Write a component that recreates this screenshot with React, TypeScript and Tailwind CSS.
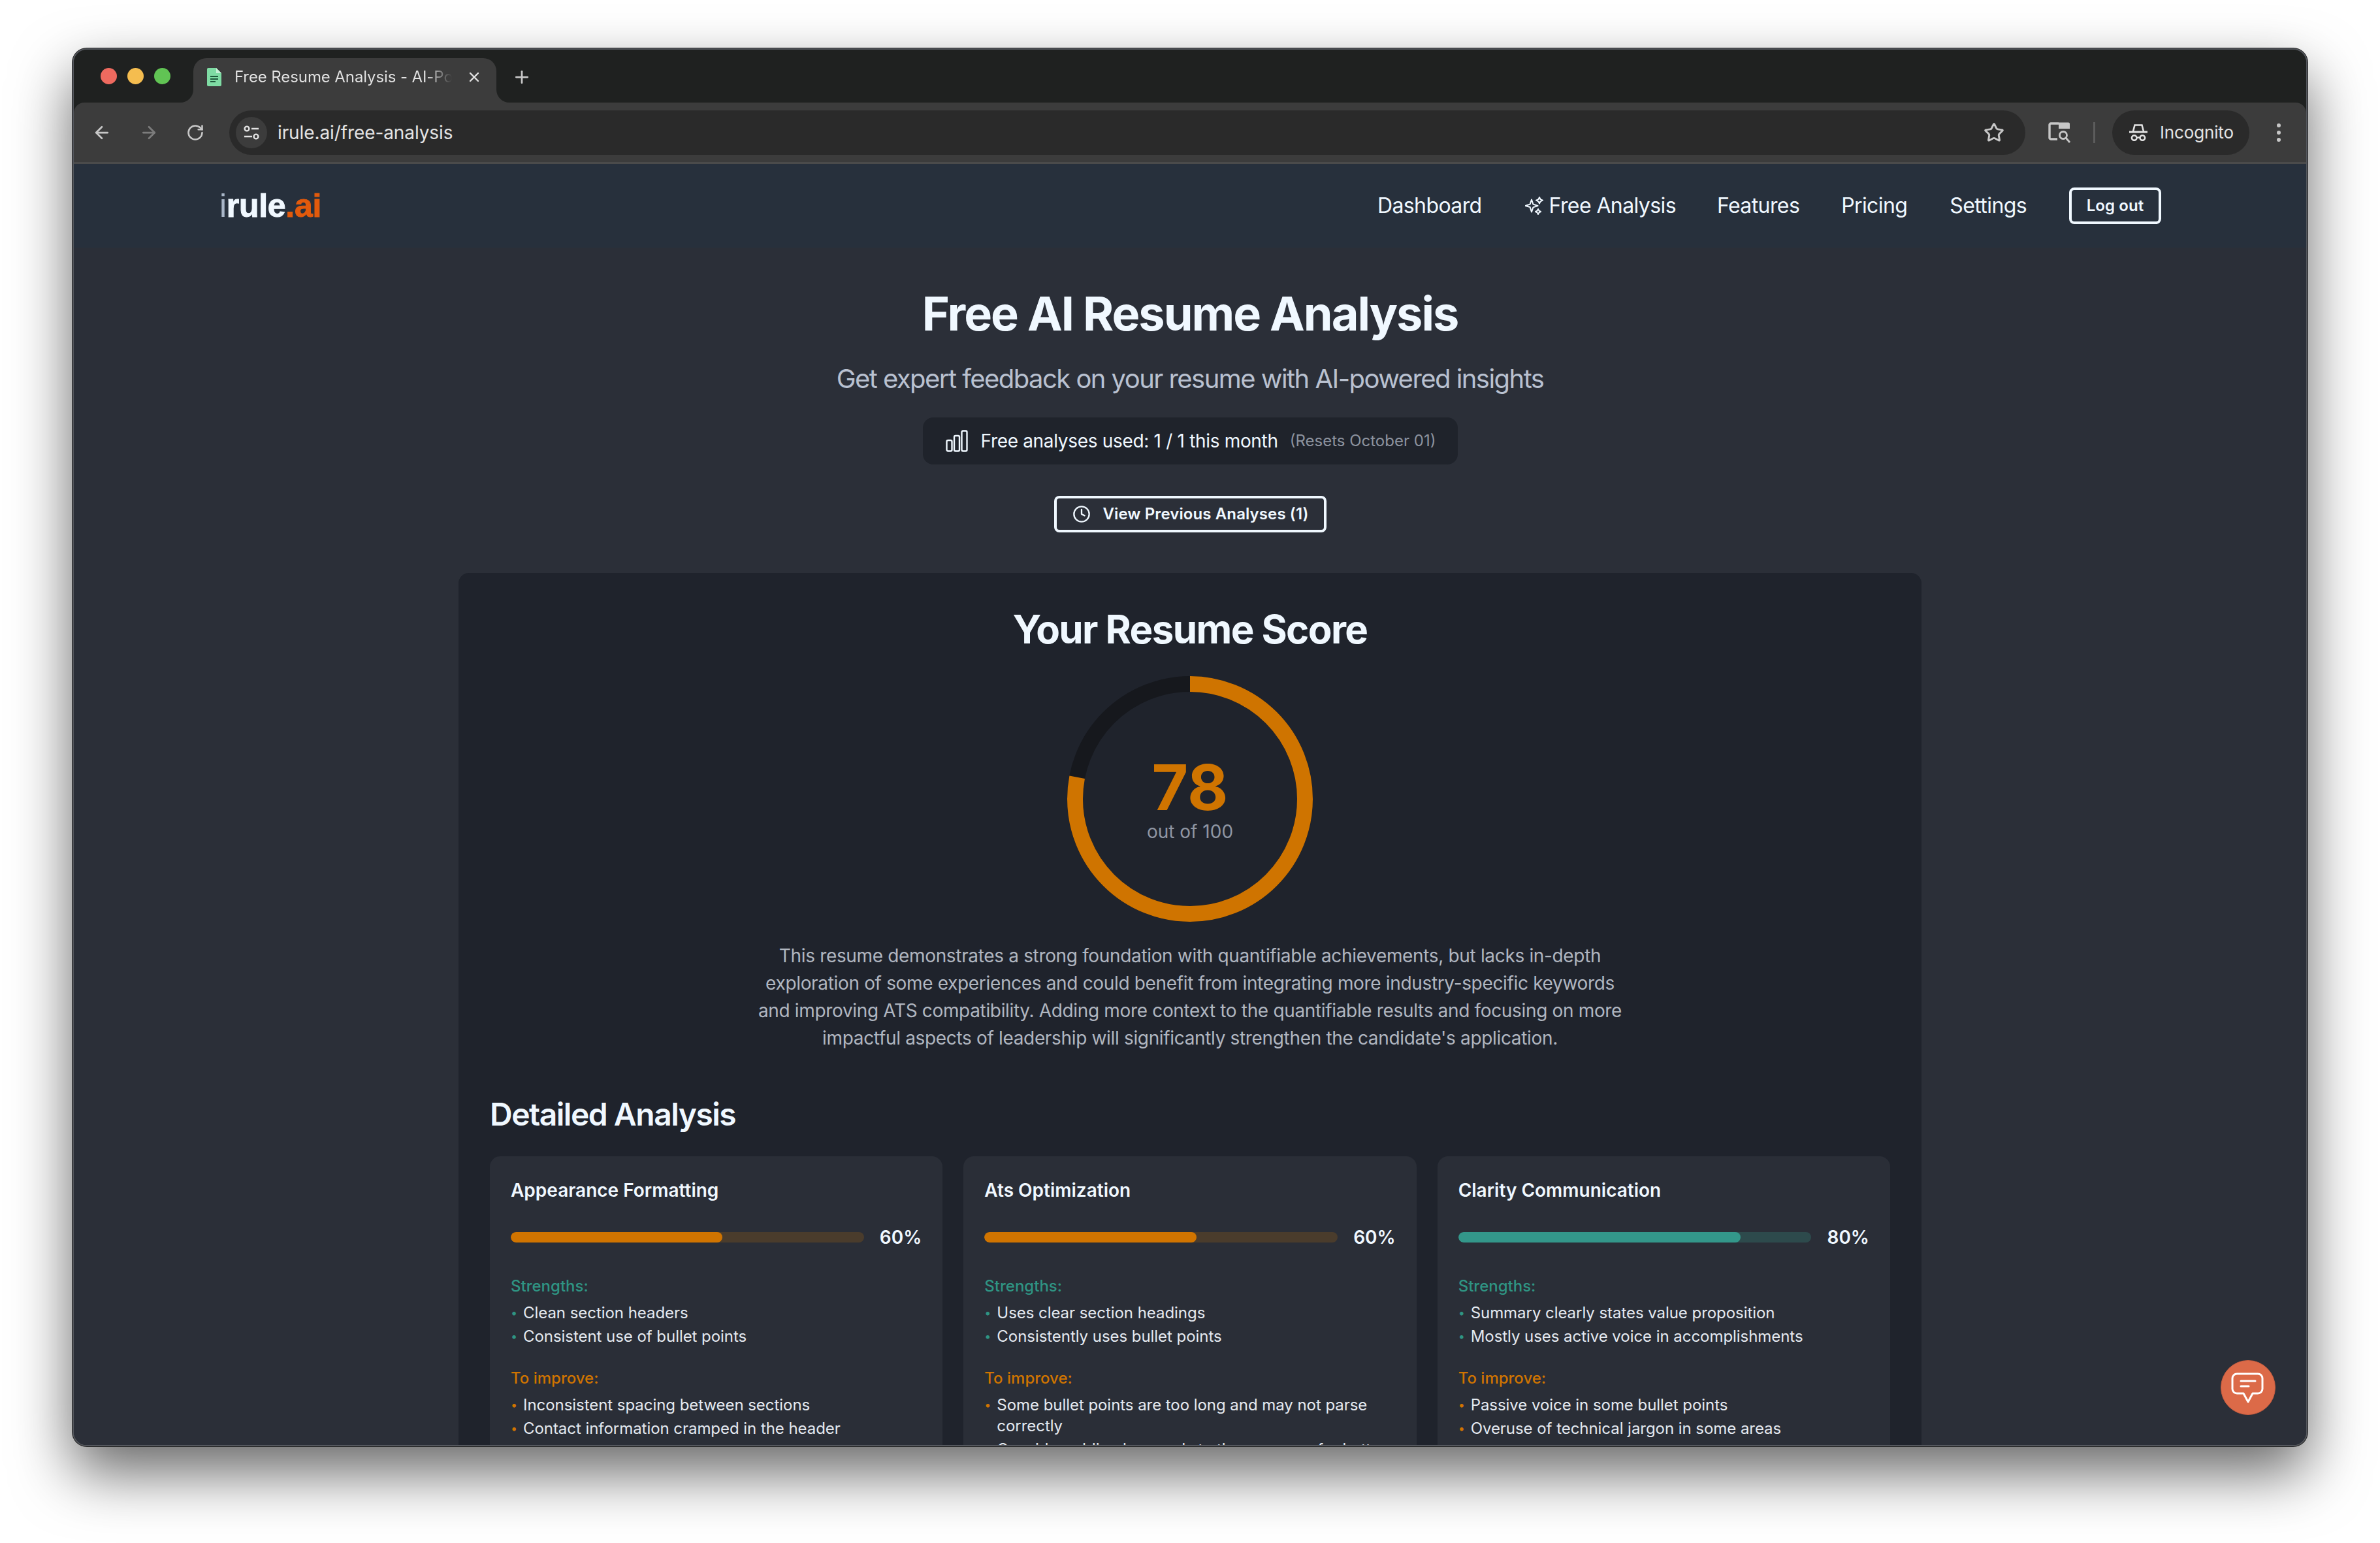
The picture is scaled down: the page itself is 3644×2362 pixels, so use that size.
import { ArrowLeft, ArrowRight, Clock, Plus, RotateCw, Star, X } from "lucide-react";

const CARDS = [
	{
		title: "Appearance Formatting",
		score: 60,
		strengths: ["Clean section headers", "Consistent use of bullet points"],
		improve: ["Inconsistent spacing between sections", "Contact information cramped in the header"],
	},
	{
		title: "Ats Optimization",
		score: 60,
		strengths: ["Uses clear section headings", "Consistently uses bullet points"],
		improve: ["Some bullet points are too long and may not parse correctly", "Consider adding keywords to the summary for better"],
	},
	{
		title: "Clarity Communication",
		score: 80,
		strengths: ["Summary clearly states value proposition", "Mostly uses active voice in accomplishments"],
		improve: ["Passive voice in some bullet points", "Overuse of technical jargon in some areas"],
	},
];

function BulletList({ items, dot }: { items: string[]; dot: string }) {
	return (
		<ul className="mt-[9px] flex flex-col gap-[4px]">
			{items.map((item) => (
				<li key={item} className="flex text-[24px] leading-[32px] tracking-[-0.05px] text-[#e4e9f0]">
					<span className={`w-[19px] shrink-0 text-[18px] ${dot}`}>•</span>
					<span>{item}</span>
				</li>
			))}
		</ul>
	);
}

function AnalysisCard({ card }: { card: (typeof CARDS)[number] }) {
	const good = card.score >= 70;
	return (
		<div className="h-[520px] rounded-[16px] bg-[#2a2e37] px-[32px] pt-[32px]">
			<h3 className="text-[28px] leading-[40px] font-semibold text-[#f0f8ff]">{card.title}</h3>
			<div className="mt-[32px] flex h-[40px] items-center gap-[24px]">
				<div className={`h-[16px] flex-1 overflow-hidden rounded-full ${good ? "bg-[#2d4a4c]" : "bg-[#4a3c2c]"}`}>
					{/* bar width comes from the score */}
					<div className={`h-full rounded-full ${good ? "bg-[#33978a]" : "bg-[#d07400]"}`} style={{ width: `${card.score}%` }} />
				</div>
				<span className="text-[28px] leading-[40px] font-semibold text-[#f0f8ff]">{card.score}%</span>
			</div>
			<div className="mt-[39px] text-[24px] leading-[32px] font-medium text-[#2f9483]">Strengths:</div>
			<BulletList items={card.strengths} dot="text-[#2f9483]" />
			<div className="mt-[32px] text-[24px] leading-[32px] font-medium text-[#d07400]">To improve:</div>
			<BulletList items={card.improve} dot="text-[#d07400]" />
		</div>
	);
}

function ScoreRing({ score }: { score: number }) {
	const r = 176;
	const c = 2 * Math.PI * r;
	return (
		<div className="relative mx-auto mt-[36px] h-[376px] w-[376px]">
			<svg viewBox="0 0 376 376" className="h-[376px] w-[376px] -rotate-90">
				<circle cx="188" cy="188" r={r} fill="none" stroke="#16181d" strokeWidth="24" />
				<circle cx="188" cy="188" r={r} fill="none" stroke="#cf7400" strokeWidth="24" strokeDasharray={`${(c * score) / 100} ${c}`} />
			</svg>
			<div className="absolute inset-0 flex flex-col items-center justify-center">
				<span className="mt-[4px] text-[96px] leading-[96px] font-bold text-[#cf7400]">{score}</span>
				<span className="text-[28px] leading-[40px] text-[#8f96a3]">out of 100</span>
			</div>
		</div>
	);
}

function BrowserChrome() {
	return (
		<>
			<div className="flex h-[81px] shrink-0 items-end bg-[#1f2120] pl-[41px]">
				<div className="flex h-[69px] items-center gap-[16px] self-end pb-[12px]">
					<span className="h-[25px] w-[25px] rounded-full bg-[#ee6a5f]" />
					<span className="h-[25px] w-[25px] rounded-full bg-[#f5bd4f]" />
					<span className="h-[25px] w-[25px] rounded-full bg-[#61c454]" />
				</div>
				<div className="relative ml-[35px] flex h-[68px] w-[464px] items-center rounded-t-[20px] bg-[#3c3c3c] pb-[10px] pl-[21px]">
					<svg viewBox="0 0 20 20" className="absolute bottom-0 left-[-20px] h-[20px] w-[20px]">
						<path d="M20 0v20H0A20 20 0 0 0 20 0z" fill="#3c3c3c" />
					</svg>
					<svg viewBox="0 0 20 20" className="absolute right-[-20px] bottom-0 h-[20px] w-[20px]">
						<path d="M0 0v20h20A20 20 0 0 1 0 0z" fill="#3c3c3c" />
					</svg>
					<svg viewBox="0 0 22 28" className="h-[28px] w-[22px] shrink-0">
						<path d="M2 0h12l8 8v18a2 2 0 0 1-2 2H2a2 2 0 0 1-2-2V2a2 2 0 0 1 2-2z" fill="#7fdca4" />
						<path d="M14 0l8 8h-8z" fill="#c7f0d6" />
						<path d="M5 12h12v2H5zM5 16h12v2H5zM5 20h8v2H5z" fill="#1f5a3c" />
					</svg>
					<span className="ml-[20px] w-[333px] overflow-hidden bg-gradient-to-r from-[#e3e3e3] from-[88%] to-transparent bg-clip-text text-[24px] leading-[32px] tracking-[-0.1px] whitespace-nowrap text-transparent">
						Free Resume Analysis - AI-Po
					</span>
					<X className="ml-[22px] h-[24px] w-[24px] shrink-0 text-[#e3e3e3]" strokeWidth={2.4} />
				</div>
				<Plus className="mb-[24px] ml-[24px] h-[30px] w-[30px] text-[#c7c7c7]" strokeWidth={2.2} />
			</div>
			<div className="flex h-[94px] shrink-0 items-center rounded-t-[16px] border-b-[3px] border-[#4b4b4b] bg-[#3c3c3c] pr-[39px] pl-[28px]">
				<ArrowLeft className="h-[30px] w-[30px] text-[#c7c7c7]" strokeWidth={2.2} />
				<ArrowRight className="ml-[42px] h-[30px] w-[30px] text-[#7c7c7c]" strokeWidth={2.2} />
				<RotateCw className="ml-[42px] h-[28px] w-[28px] text-[#c7c7c7]" strokeWidth={2.2} />
				<div className="ml-[38px] flex h-[68px] flex-1 items-center rounded-full bg-[#2a2a2a] pr-[32px] pl-[10px]">
					<div className="flex h-[48px] w-[48px] items-center justify-center rounded-full bg-[#3c3c3c]">
						<svg viewBox="0 0 26 24" className="h-[24px] w-[26px]" fill="none" stroke="#e3e3e3" strokeWidth="2.4">
							<circle cx="6" cy="6" r="3.4" />
							<path d="M13 6h11M2 18h12" />
							<circle cx="20" cy="18" r="3.4" />
						</svg>
					</div>
					<span className="ml-[16px] flex-1 text-[28px] leading-[36px] tracking-[-0.1px] text-[#e3e3e3]">irule.ai/free-analysis</span>
					<Star className="h-[32px] w-[32px] text-[#c7c7c7]" strokeWidth={2.2} />
				</div>
				<svg viewBox="0 0 36 34" className="ml-[35px] h-[34px] w-[36px] shrink-0" fill="none">
					<path d="M14 27H4a2 2 0 0 1-2-2V5a2 2 0 0 1 2-2h12" stroke="#c7c7c7" strokeWidth="3.4" />
					<path d="M16 1.5h15a2 2 0 0 1 2 2V11H16z" fill="#c7c7c7" />
					<circle cx="23" cy="21" r="5.5" stroke="#c7c7c7" strokeWidth="2.8" />
					<path d="M27 25l6 7" stroke="#c7c7c7" strokeWidth="2.8" />
				</svg>
				<div className="ml-[33px] h-[32px] w-[3px] shrink-0 bg-[#5c5c5c]" />
				<div className="ml-[26px] flex h-[68px] w-[210px] shrink-0 items-center rounded-full bg-[#2a2a2a] pl-[26px]">
					<svg viewBox="0 0 28 26" className="h-[26px] w-[28px] shrink-0" fill="none" stroke="#e3e3e3" strokeWidth="2.6">
						<path d="M6 11L8.5 1.5h11L22 11" />
						<path d="M0 12h28" strokeWidth="3" />
						<circle cx="7.7" cy="21" r="3.8" />
						<circle cx="20.3" cy="21" r="3.8" />
						<path d="M11.5 20.5h5" />
					</svg>
					<span className="ml-[19px] text-[26px] leading-[34px] tracking-[-0.15px] text-[#e3e3e3]">Incognito</span>
				</div>
				<div className="ml-[42px] flex shrink-0 flex-col gap-[5px]">
					<span className="h-[6px] w-[6px] rounded-full bg-[#c7c7c7]" />
					<span className="h-[6px] w-[6px] rounded-full bg-[#c7c7c7]" />
					<span className="h-[6px] w-[6px] rounded-full bg-[#c7c7c7]" />
				</div>
			</div>
		</>
	);
}

function SiteHeader() {
	return (
		<header className="flex h-[128px] shrink-0 items-center justify-between bg-[#27303c] pr-[222px] pl-[223px]">
			<div className="font-['Liberation_Sans',sans-serif] text-[50px] leading-[50px] font-bold tracking-[-0.3px]">
				<span className="font-normal text-[#a9b6c8]">i</span>
				<span className="text-[#f0f8ff] [-webkit-text-stroke:1px_#f0f8ff]">rule</span>
				<span className="text-[#e25a0c] [-webkit-text-stroke:1px_#e25a0c]">.ai</span>
			</div>
			<nav className="flex items-center text-[32px] leading-[48px] tracking-[-0.6px] text-[#f0f8ff]">
				<a>Dashboard</a>
				<a className="ml-[66px] flex items-center gap-[9px]">
					<svg viewBox="0 0 28 28" className="h-[28px] w-[28px]" fill="none" stroke="#f0f8ff" strokeWidth="2" strokeLinejoin="round">
						<path d="M10 4.5l2.4 7.1 7.1 2.4-7.1 2.4L10 23.5l-2.4-7.5L.5 14l7.1-2.4z" />
						<path d="M22 1l1.6 3.2L27 5.7l-3.4 1.6L22 10.5l-1.6-3.2L17 5.7l3.4-1.5z" />
						<path d="M20 19l1.4 2.6L24 23l-2.6 1.4L20 27l-1.4-2.6L16 23l2.6-1.4z" />
					</svg>
					Free Analysis
				</a>
				<a className="ml-[63px]">Features</a>
				<a className="ml-[64px]">Pricing</a>
				<a className="ml-[65px]">Settings</a>
				<button className="ml-[65px] h-[56px] w-[141px] rounded-[8px] border-[4px] border-[#f0f8ff] text-[24px] leading-[32px] font-semibold tracking-[0.1px]">Log out</button>
			</nav>
		</header>
	);
}

export default function App() {
	return (
		<div className="h-[2362px] w-[3644px] overflow-hidden bg-white pt-[74px] pl-[111px] font-['Inter',sans-serif]">
			<div className="relative flex h-[2140px] w-[3422px] flex-col overflow-hidden rounded-[22px] border-[2px] border-[#55585e] bg-[#1f2120] shadow-[0_0_0_1px_#222,0_40px_90px_rgba(0,0,0,0.6)]">
				<BrowserChrome />
				<SiteHeader />
				<main className="min-h-0 flex-1 bg-[#2b2f38] pt-[61px]">
					<div className="text-center">
						<h1 className="text-[72px] leading-[80px] font-bold tracking-[-2px] text-[#f0f8ff]">Free AI Resume Analysis</h1>
						<p className="mt-[32px] text-[40px] leading-[56px] tracking-[-1.55px] text-[#b9c1d0]">Get expert feedback on your resume with AI-powered insights</p>
						<div className="mx-auto mt-[31px] flex h-[72px] w-[819px] items-center rounded-[16px] bg-[#1f232b] pl-[35px]">
							<svg viewBox="0 0 34 34" className="h-[34px] w-[34px] shrink-0" fill="none" stroke="#f0f8ff" strokeWidth="2.4">
								<rect x="1.5" y="16" width="8" height="16.5" rx="2" />
								<rect x="13" y="9" width="8" height="23.5" rx="2" />
								<rect x="24.5" y="1.5" width="8" height="31" rx="2" />
							</svg>
							<span className="ml-[20px] text-[28px] leading-[40px] tracking-[-0.32px] text-[#f0f8ff]">Free analyses used: 1 / 1 this month</span>
							<span className="ml-[18px] text-[24px] leading-[32px] text-[#8d939f]">(Resets October 01)</span>
						</div>
						<button className="mx-auto mt-[48px] flex h-[56px] w-[417px] items-center rounded-[8px] border-[4px] border-[#f0f8ff] pl-[24px] text-[24px] leading-[32px] font-semibold tracking-[0.1px] text-[#f0f8ff]">
							<Clock className="h-[28px] w-[28px]" strokeWidth={2} />
							<span className="ml-[19px]">View Previous Analyses (1)</span>
						</button>
					</div>
					<section className="mx-auto mt-[62px] h-[1400px] w-[2240px] rounded-[16px] bg-[#1f232c] px-[48px] pt-[50px]">
						<h2 className="text-center text-[60px] leading-[72px] font-bold tracking-[-1.6px] text-[#f0f8ff]">Your Resume Score</h2>
						<ScoreRing score={78} />
						<p className="mx-auto mt-[31px] w-[1344px] text-center text-[28px] leading-[42px] tracking-[-0.34px] text-[#b0b6c0]">
							This resume demonstrates a strong foundation with quantifiable achievements, but lacks in-depth exploration of some experiences and could benefit from integrating more industry-specific keywords and improving ATS compatibility. Adding more context to the quantifiable results and focusing on more impactful aspects of leadership will significantly strengthen the candidate's application.
						</p>
						<h2 className="mt-[64px] text-[48px] leading-[64px] font-semibold tracking-[-1.5px] text-[#f0f8ff]">Detailed Analysis</h2>
						<div className="mt-[32px] grid grid-cols-3 gap-[32px]">
							{CARDS.map((card) => (
								<AnalysisCard key={card.title} card={card} />
							))}
						</div>
					</section>
				</main>
				<button className="absolute top-[2006px] left-[3287px] flex h-[84px] w-[84px] items-center justify-center rounded-full border-[1px] border-[#c85e40] bg-[#dc6a48]">
					<svg viewBox="0 0 56 56" className="h-[56px] w-[56px]" fill="none" stroke="#fff" strokeWidth="3" strokeLinejoin="round">
						<path d="M11 7h32a7 7 0 0 1 7 7v16a7 7 0 0 1-7 7h-8l-7 13-7-13H11a7 7 0 0 1-7-7V14a7 7 0 0 1 7-7z" />
						<path d="M17 18h22M17 26h12" strokeLinecap="round" />
					</svg>
				</button>
			</div>
		</div>
	);
}
